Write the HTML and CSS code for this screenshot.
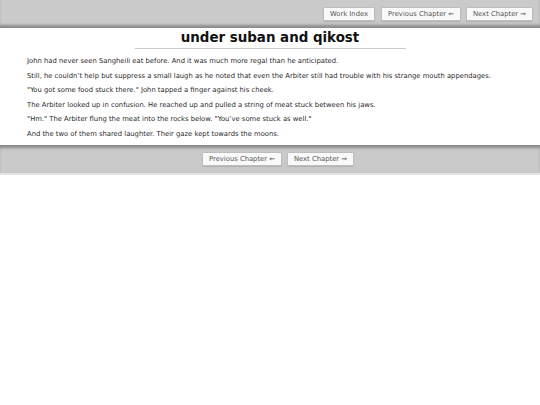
FILE: index.html
```html
<!DOCTYPE html>
<html>
<head>
<meta charset="utf-8">
<link rel="stylesheet" href="styles.css">
</head>
<body>
<div class="navbar top">
  <a class="btn">Work Index</a>
  <a class="btn">Previous Chapter ←</a>
  <a class="btn">Next Chapter →</a>
</div>
<div class="chapter">
  <h2 class="title">under suban and qikost</h2>
  <div class="text">
    <p>John had never seen Sangheili eat before. And it was much more regal than he anticipated.</p>
    <p>Still, he couldn’t help but suppress a small laugh as he noted that even the Arbiter still had trouble with his strange mouth appendages.</p>
    <p>"You got some food stuck there." John tapped a finger against his cheek.</p>
    <p>The Arbiter looked up in confusion. He reached up and pulled a string of meat stuck between his jaws.</p>
    <p>"Hm." The Arbiter flung the meat into the rocks below. "You’ve some stuck as well."</p>
    <p>And the two of them shared laughter. Their gaze kept towards the moons.</p>
  </div>
</div>
<div class="navbar bottom">
  <a class="btn">Previous Chapter ←</a>
  <a class="btn">Next Chapter →</a>
</div>
</body>
</html>
```
FILE: styles.css
```css
html, body {
  margin: 0;
  padding: 0;
  background: #fff;
}
body {
  font-family: "DejaVu Sans", Verdana, sans-serif;
  color: #2a2a2a;
}
.navbar {
  display: flex;
  gap: 5px;
  background: #cacaca;
}
.navbar.top {
  justify-content: flex-end;
  height: 28px;
  padding: 7px 7px 0 0;
  box-sizing: border-box;
  box-shadow: inset 0 -4px 3px -1px #8a8a8a;
}
.navbar.bottom {
  justify-content: center;
  height: 30px;
  padding: 7px 0 0 16px;
  box-sizing: border-box;
  margin-top: 3px;
  box-shadow: inset 0 4px 3px -1px #8a8a8a;
  border-bottom: 2px solid #e4e4e4;
}
.btn {
  display: inline-block;
  height: 14px;
  box-sizing: border-box;
  padding: 0 6px;
  font-size: 6.8px;
  line-height: 12px;
  color: #555;
  background: #f9f9f9;
  border: 1px solid #bdbdbd;
  border-radius: 1px;
  box-shadow: 0 1px 1px rgba(0,0,0,0.12);
}
.top .btn:first-child {
  margin-right: 1px;
}
.chapter {
  padding: 0 27px;
}
.title {
  margin: 0 auto;
  width: 271px;
  text-align: center;
  font-size: 13.4px;
  font-weight: bold;
  color: #111;
  line-height: 18px;
  padding-top: 1px;
  padding-bottom: 1px;
  border-bottom: 1px solid #ccc;
}
.text {
  padding-top: 5px;
  font-size: 6.8px;
  color: #2a2a2a;
}
.text p {
  margin: 0;
  line-height: 14.6px;
}
```
